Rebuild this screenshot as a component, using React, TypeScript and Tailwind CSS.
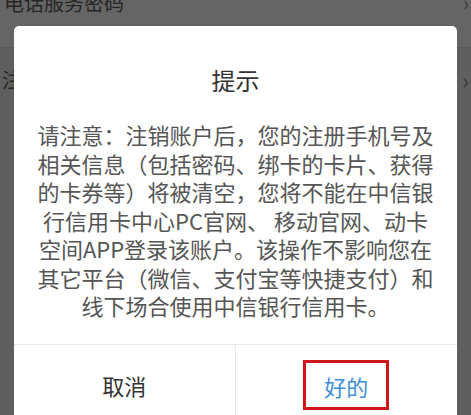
import React from "react";

const font = { fontFamily: '"Noto Sans CJK SC", "Noto Sans", sans-serif' };

export default function App() {
  const lines = [
    "请注意：注销账户后，您的注册手机号及",
    "相关信息（包括密码、绑卡的卡片、获得",
    "的卡券等）将被清空，您将不能在中信银",
    "行信用卡中心PC官网、 移动官网、动卡",
    "空间APP登录该账户。该操作不影响您在",
    "其它平台（微信、支付宝等快捷支付）和",
    "线下场合使用中信银行信用卡。",
  ];
  return (
    <div
      className="relative w-[471px] h-[415px] overflow-hidden bg-[#5f5f5f]"
      style={font}
    >
      {/* background list */}
      <div className="flex h-[48px] items-start justify-between border-b border-[#585858] bg-[#656565] pl-[4px] pr-[2px]">
        <span className="-mt-[11px] text-[20px] leading-[28px] text-[#262626]">
          电话服务密码
        </span>
        <span className="-mt-[11px] text-[20px] leading-[28px] text-[#3a3a3a]">
          ›
        </span>
      </div>
      <div className="flex h-[64px] items-center justify-between pl-[2px] pr-[2px]">
        <span className="text-[20px] leading-[28px] text-[#262626]">注销账户</span>
        <span className="text-[24px] leading-[28px] text-[#3a3a3a]">›</span>
      </div>

      {/* dialog */}
      <div className="absolute left-[14px] top-[26px] w-[443px] overflow-hidden rounded-[5px] bg-white">
        <div className="pt-[38px] text-center text-[24px] leading-[32px] text-[#333333]">
          提示
        </div>
        <div className="px-[22px] pt-[24px] pb-[24px] text-center text-[22px] leading-[28.5px] text-[#555555]">
          {lines.map((l, i) => (
            <div key={i} className="whitespace-pre">
              {l}
            </div>
          ))}
        </div>
        <div className="grid h-[82px] grid-cols-2 border-t border-[#e8e8e8]">
          <div className="flex items-center justify-center border-r border-[#e8e8e8] text-[22px] text-[#333333]">
            取消
          </div>
          <div className="flex items-center justify-center">
            <div className="flex h-[50px] w-[86px] items-center justify-center border-[3px] border-[#d0161d] pt-[3px] text-[22px] text-[#3f8fd6]">
              好的
            </div>
          </div>
        </div>
      </div>
    </div>
  );
}
